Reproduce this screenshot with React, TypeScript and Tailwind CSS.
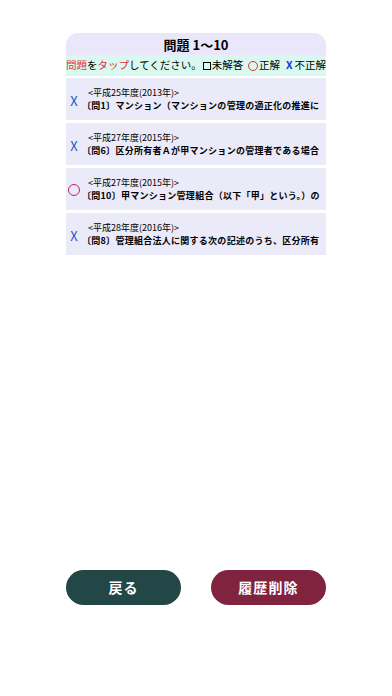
import React from 'react';

type Item = { mark: 'x' | 'o'; year: string; title: string };

const items: Item[] = [
  { mark: 'x', year: '<平成25年度(2013年)>', title: '〔問1〕マンション（マンションの管理の適正化の推進に' },
  { mark: 'x', year: '<平成27年度(2015年)>', title: '〔問6〕区分所有者Ａが甲マンションの管理者である場合' },
  { mark: 'o', year: '<平成27年度(2015年)>', title: '〔問10〕甲マンション管理組合（以下「甲」という。）の' },
  { mark: 'x', year: '<平成28年度(2016年)>', title: '〔問8〕管理組合法人に関する次の記述のうち、区分所有' },
];

const font = { fontFamily: '"Noto Sans CJK JP", "Noto Sans", sans-serif' };

export default function App() {
  return (
    <div className="w-[392px] h-[696px] bg-white flex flex-col items-center" style={font}>
      <div className="w-[260px] mt-[33px] flex flex-col">
        {/* ヘッダー */}
        <div className="h-[22px] bg-[#e9e7f9] rounded-t-[12px] flex items-center justify-center">
          <span className="text-[13px] font-bold text-black leading-none">問題 1〜10</span>
        </div>
        <div className="h-[21px] bg-[#d9f8ef] flex items-center justify-center text-[10.5px] text-black leading-none whitespace-nowrap">
          <span className="text-[#e0303a]">問題</span>
          <span>を</span>
          <span className="text-[#e0303a]">タップ</span>
          <span>してください。</span>
          <span className="inline-block w-[8px] h-[8px] border border-black ml-[1px] mr-[1px]"></span>
          <span>未解答</span>
          <span className="inline-block w-[10px] h-[10px] rounded-full border-[1.5px] border-[#e0303a] ml-[5px] mr-[1px]"></span>
          <span>正解</span>
          <span className="text-[#1538d8] font-bold ml-[6px] mr-[2px]">X</span>
          <span>不正解</span>
        </div>

        {/* 履歴リスト */}
        <div className="mt-[2px] flex flex-col gap-[3px]">
          {items.map((it, i) => (
            <div key={i} className="h-[42px] bg-[#ebeaf8] flex items-center">
              <div className="w-[16px] flex justify-center shrink-0">
                {it.mark === 'x' ? (
                  <span className="text-[#1a5bc4] text-[13px] leading-none mt-[2px]">X</span>
                ) : (
                  <span className="inline-block w-[12px] h-[12px] rounded-full border-[1.5px] border-[#c2246a] mt-[2px]"></span>
                )}
              </div>
              <div className="flex flex-col">
                <span className="text-[9px] text-black leading-[13px] ml-[6px]">{it.year}</span>
                <span className="text-[9px] font-bold text-black leading-[14px] tracking-[0.03em] whitespace-nowrap">
                  {it.title}
                </span>
              </div>
            </div>
          ))}
        </div>
      </div>

      <div className="flex-1"></div>

      <div className="w-[260px] flex justify-between mb-[91px]">
        <button className="w-[115px] h-[35px] rounded-full bg-[#234646] text-white text-[14px] font-bold tracking-[0.08em]">
          戻る
        </button>
        <button className="w-[115px] h-[35px] rounded-full bg-[#80233f] text-white text-[14px] font-bold tracking-[0.08em]">
          履歴削除
        </button>
      </div>
    </div>
  );
}
